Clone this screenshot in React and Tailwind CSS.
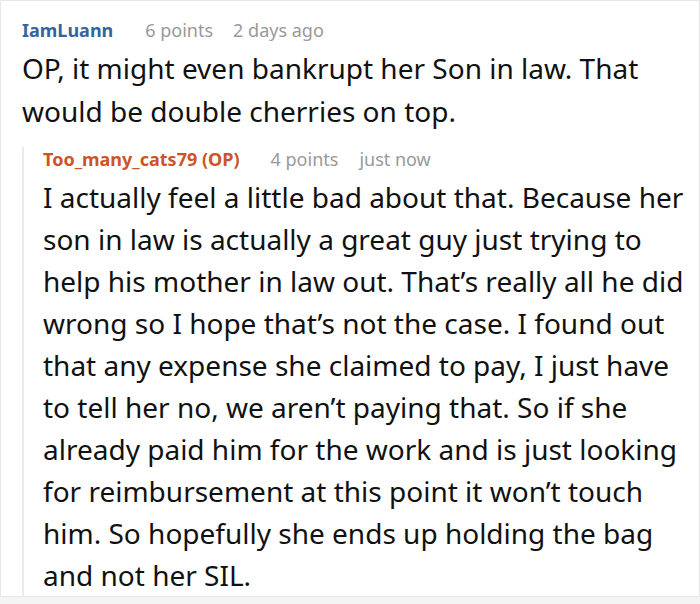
export default function App() {
  return (
    <div className="w-[700px] h-[604px] bg-[#f4f4f4] overflow-hidden" style={{ fontFamily: '"Noto Sans", sans-serif' }}>
      <div className="h-[597px] bg-white border border-[#e6e6e6] pl-[21px] pr-2 pt-[17px]">
        <div className="flex items-baseline text-[18px] leading-[24px]">
          <span className="font-bold text-[#36649c]">IamLuann</span>
          <span className="ml-[32px] text-[#999999]">6 points</span>
          <span className="ml-[20px] text-[#999999]">2 days ago</span>
        </div>
        <p className="mt-[5px] text-[28px] leading-[43px] text-[#111111]">
          OP, it might even bankrupt her Son in law. That would be double cherries on top.
        </p>
        <div className="mt-[14px] border-l-2 border-[#ebebeb] pl-[19px]">
          <div className="flex items-baseline text-[18px] leading-[24px]">
            <span className="font-bold text-[#cc5527]">Too_many_cats79 (OP)</span>
            <span className="ml-[31px] text-[#999999]">4 points</span>
            <span className="ml-[21px] text-[#999999]">just now</span>
          </div>
          <p className="mt-[5px] text-[28px] leading-[42px] text-[#111111]">
            I actually feel a little bad about that. Because her son in law is actually a great guy just trying to help his mother in law out. That’s really all he did wrong so I hope that’s not the case. I found out that any expense she claimed to pay, I just have to tell her no, we aren’t paying that. So if she already paid him for the work and is just looking for reimbursement at this point it won’t touch him. So hopefully she ends up holding the bag and not her SIL.
          </p>
        </div>
      </div>
    </div>
  );
}
